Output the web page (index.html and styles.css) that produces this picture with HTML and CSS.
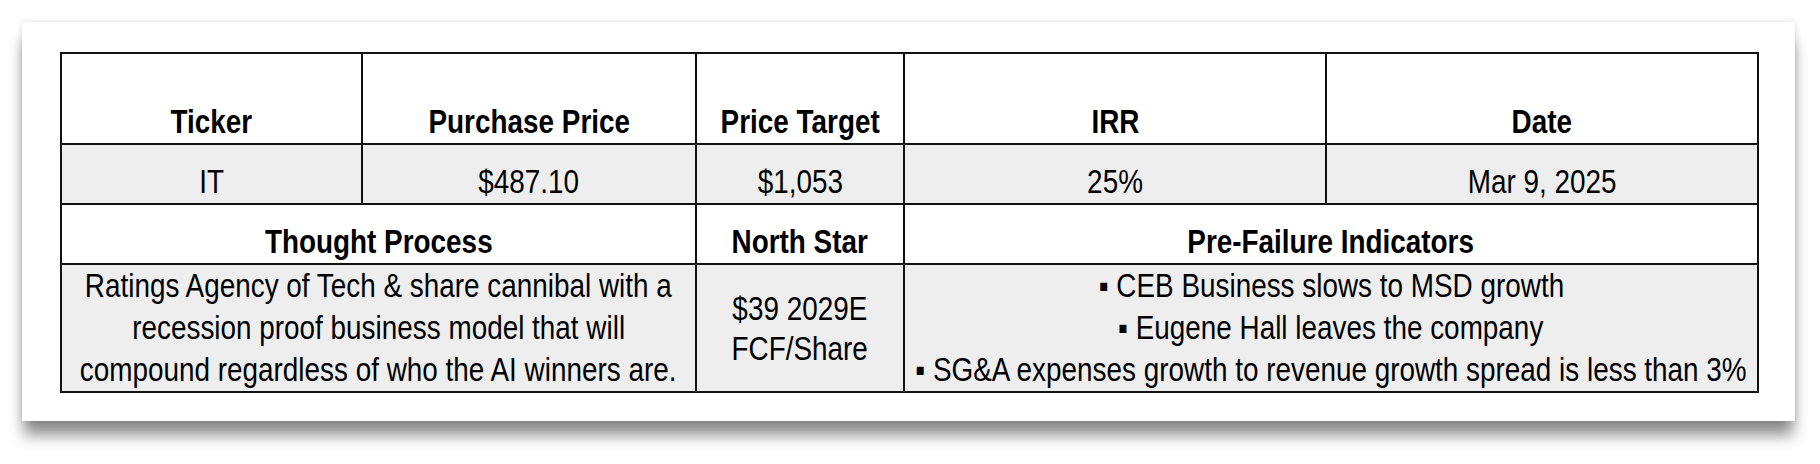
FILE: index.html
```html
<!DOCTYPE html>
<html lang="en">
<head>
<meta charset="utf-8">
<title>IT Thesis</title>
<link rel="stylesheet" href="styles.css">
</head>
<body>
<div class="card">
  <table class="thesis">
    <colgroup>
      <col class="c-ticker">
      <col class="c-purchase">
      <col class="c-target">
      <col class="c-irr">
      <col class="c-date">
    </colgroup>
    <tr class="head top">
      <th><div class="line"><span class="t">Ticker</span></div></th>
      <th><div class="line"><span class="t">Purchase Price</span></div></th>
      <th><div class="line"><span class="t">Price Target</span></div></th>
      <th><div class="line"><span class="t">IRR</span></div></th>
      <th><div class="line"><span class="t">Date</span></div></th>
    </tr>
    <tr class="data">
      <td><div class="line"><span class="t">IT</span></div></td>
      <td><div class="line"><span class="t">$487.10</span></div></td>
      <td><div class="line"><span class="t">$1,053</span></div></td>
      <td><div class="line"><span class="t">25%</span></div></td>
      <td><div class="line"><span class="t">Mar 9, 2025</span></div></td>
    </tr>
    <tr class="head sub">
      <th colspan="2"><div class="line"><span class="t">Thought Process</span></div></th>
      <th><div class="line"><span class="t">North Star</span></div></th>
      <th colspan="2"><div class="line"><span class="t">Pre-Failure Indicators</span></div></th>
    </tr>
    <tr class="data detail">
      <td colspan="2">
        <div class="line"><span class="t">Ratings Agency of Tech &amp; share cannibal with a</span></div>
        <div class="line"><span class="t">recession proof business model that will</span></div>
        <div class="line"><span class="t">compound regardless of who the AI winners are.</span></div>
      </td>
      <td class="mid">
        <div class="line"><span class="t">$39 2029E</span></div>
        <div class="line"><span class="t">FCF/Share</span></div>
      </td>
      <td colspan="2">
        <div class="line"><span class="t">▪ CEB Business slows to MSD growth</span></div>
        <div class="line"><span class="t">▪ Eugene Hall leaves the company</span></div>
        <div class="line"><span class="t">▪ SG&amp;A expenses growth to revenue growth spread is less than 3%</span></div>
      </td>
    </tr>
  </table>
</div>
</body>
</html>
```
FILE: styles.css
```css
html, body {
  margin: 0;
  padding: 0;
  background: #ffffff;
}
html { height: 464px; }
body {
  box-sizing: border-box;
  height: 464px;
  padding: 22px 0 0 22px;
  font-family: "Liberation Sans", Arial, sans-serif;
  color: #000;
}
.card {
  width: 1773px;
  height: 399px;
  box-sizing: border-box;
  padding: 30px 0 0 38px;
  background: #fff;
  box-shadow: 0 16px 14px -2px rgba(0, 0, 0, 0.45), 0 0 6px rgba(0, 0, 0, 0.14);
}
.thesis {
  border-collapse: collapse;
  table-layout: fixed;
  width: 1699px;
  font-size: 33px;
  line-height: 42px;
}
.c-ticker { width: 301px; }
.c-purchase { width: 334px; }
.c-target { width: 208px; }
.c-irr { width: 422px; }
.c-date { width: 432px; }
.thesis th,
.thesis td {
  border: 2px solid #111;
  padding: 0 2px;
  text-align: center;
  vertical-align: bottom;
  white-space: nowrap;
}
.thesis th {
  font-weight: 700;
  background: #fff;
}
.thesis td {
  font-weight: 400;
  background: #eeeeee;
}
.top { height: 91px; }
.data { height: 60px; }
.sub { height: 60px; }
.detail { height: 128px; }
.line {
  display: flex;
  justify-content: center;
  height: 42px;
}
.t {
  display: inline-block;
  flex: none;
  transform: scaleX(0.845);
  transform-origin: center;
}
.thesis td.mid { vertical-align: middle; }
.thesis td.mid .line { height: 40px; }
```
